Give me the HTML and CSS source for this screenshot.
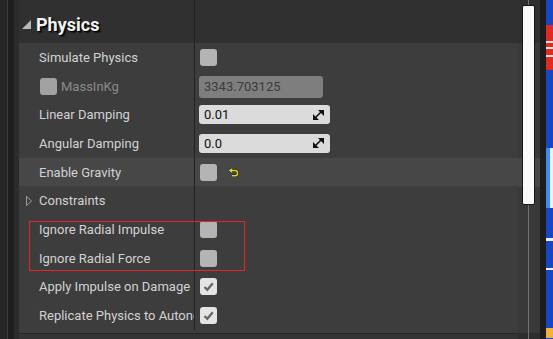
FILE: index.html
```html
<!DOCTYPE html>
<html lang="en">
<head>
  <title>Physics</title>
  <link rel="stylesheet" href="styles.css">
</head>
<body>
  <div class="edge"></div>
  <div class="gutter"></div>
  <div class="gutter2"></div>

  <div class="details">
    <div class="category">
      <div class="name">
        <svg class="cat-arrow" width="9" height="9" viewBox="0 0 9 9"><polygon points="9,0 9,9 0,9" fill="#b8b8b8"/></svg>
        <span class="cat-title">Physics</span>
      </div>
    </div>

    <div class="row">
      <div class="name">Simulate Physics</div>
      <div class="value"><span class="check"></span></div>
    </div>
    <div class="row">
      <div class="name name-sub">
        <span class="check check-off"></span>
        <span class="dim">MassInKg</span>
      </div>
      <div class="value"><div class="field field-off">3343.703125</div></div>
    </div>
    <div class="row">
      <div class="name">Linear Damping</div>
      <div class="value">
        <div class="field">0.01
          <svg class="spin" width="11" height="10" viewBox="0 0 11 10"><path d="M5 0H11V6Z M0 4V10H6Z" fill="#111"/><path d="M2.5 7.5L8.5 1.5" stroke="#111" stroke-width="1.6"/></svg>
        </div>
      </div>
    </div>
    <div class="row">
      <div class="name">Angular Damping</div>
      <div class="value">
        <div class="field">0.0
          <svg class="spin" width="11" height="10" viewBox="0 0 11 10"><path d="M5 0H11V6Z M0 4V10H6Z" fill="#111"/><path d="M2.5 7.5L8.5 1.5" stroke="#111" stroke-width="1.6"/></svg>
        </div>
      </div>
    </div>
    <div class="row row-hover">
      <div class="name">Enable Gravity</div>
      <div class="value">
        <span class="check"></span>
        <svg class="reset" width="10" height="10" viewBox="0 0 10 10">
          <path d="M3 0.8L1 2.5L3 4.2 M1 2.5H6Q8.6 2.5 8.6 5.2Q8.6 7.8 6 7.8H3" fill="none" stroke="#1b1b0a" stroke-width="2.6"/>
          <path d="M3 0.8L1 2.5L3 4.2 M1 2.5H6Q8.6 2.5 8.6 5.2Q8.6 7.8 6 7.8H3" fill="none" stroke="#d6d43c" stroke-width="1.5"/>
        </svg>
      </div>
    </div>
    <div class="row">
      <div class="name name-group">
        <svg width="6" height="10" viewBox="0 0 6 10"><polygon points="0.5,0.5 5.5,5 0.5,9.5" fill="none" stroke="#9c9c9c"/></svg>
        <span>Constraints</span>
      </div>
      <div class="value"></div>
    </div>
    <div class="row">
      <div class="name">Ignore Radial Impulse</div>
      <div class="value"><span class="check"></span></div>
    </div>
    <div class="row">
      <div class="name">Ignore Radial Force</div>
      <div class="value"><span class="check"></span></div>
    </div>
    <div class="row">
      <div class="name">Apply Impulse on Damage</div>
      <div class="value">
        <span class="check check-on"><svg width="17" height="17" viewBox="0 0 17 17"><path d="M4.5 9L7.3 11.8L12.8 5.2" fill="none" stroke="#686868" stroke-width="2.4"/></svg></span>
      </div>
    </div>
    <div class="row">
      <div class="name">Replicate Physics to Autonomous Proxy</div>
      <div class="value">
        <span class="check check-on"><svg width="17" height="17" viewBox="0 0 17 17"><path d="M4.5 9L7.3 11.8L12.8 5.2" fill="none" stroke="#686868" stroke-width="2.4"/></svg></span>
      </div>
    </div>

    <div class="details-end"></div>
    <div class="highlight"></div>
  </div>

  <div class="scroll">
    <div class="thumb"></div>
  </div>
  <div class="side"></div>
  <div class="desktop">
    <div class="dk-red"></div>
    <div class="dk-blue"></div>
    <div class="dk-light"></div>
    <div class="dk-blue2"></div>
  </div>
</body>
</html>
```

FILE: styles.css
```css
body {
  margin: 0;
  width: 553px;
  height: 339px;
  overflow: hidden;
  display: flex;
  background-color: #262626;
  font-family: Roboto, "Liberation Sans", sans-serif;
  font-size: 13px;
  color: #d2d2d2;
}

.edge {
  width: 7px;
  background-color: #262626;
  border-right: 1px solid #3b3b3b;
}

.gutter {
  width: 6px;
  background-color: #1e1e1e;
}

.gutter2 {
  width: 5px;
  background-color: #2b2b2b;
}

.details {
  width: 499px;
  position: relative;
  display: flex;
  flex-direction: column;
  background-color: #3d3d3d;
}

.category {
  height: 43px;
  display: flex;
  background-color: #303030;
}

.category .name {
  padding-left: 3px;
  padding-top: 6px;
  gap: 5px;
}

.cat-title {
  font-size: 18px;
  font-weight: bold;
  color: #f2f2f2;
  text-shadow: 1px 1px 0 #000, 2px 2px 1px rgba(0, 0, 0, 0.6);
}

.row {
  height: 28.7px;
  display: flex;
}

.row-hover {
  background-color: #474747;
}

.name {
  width: 176px;
  box-sizing: border-box;
  border-right: 1px solid #222;
  padding-left: 20px;
  display: flex;
  align-items: center;
  white-space: nowrap;
  overflow: hidden;
}

.name-sub {
  padding-left: 21px;
  gap: 4px;
}

.name-group {
  padding-left: 7px;
  gap: 7px;
}

.dim {
  color: #8a8a8a;
}

.value {
  flex: 1;
  padding-left: 5px;
  display: flex;
  align-items: center;
  gap: 12px;
}

.check {
  width: 17px;
  height: 17px;
  border-radius: 3px;
  background-color: #b4b4b4;
  display: block;
}

.check-off {
  background-color: #a2a2a2;
}

.check-on {
  background-color: #e4e4e4;
}

.check-on svg {
  display: block;
}

.field {
  width: 131px;
  height: 19px;
  box-sizing: border-box;
  border-radius: 3px;
  background-color: #dbdbdb;
  color: #111;
  padding: 0 6px 0 5px;
  display: flex;
  align-items: center;
  justify-content: space-between;
  margin-left: -1px;
}

.field-off {
  width: 124px;
  height: 22px;
  background-color: #7e7e7e;
  color: #3c3c3c;
  margin-top: 1px;
}

.reset {
  margin-top: 1px;
}

.details-end {
  flex: 1;
  margin-top: 3px;
  border-top: 1px solid #262626;
  background-color: #343434;
}

.highlight {
  position: absolute;
  left: 10px;
  top: 221px;
  width: 216px;
  height: 50px;
  box-sizing: border-box;
  border: 1px solid #e2262b;
}

.scroll {
  width: 22px;
  background: linear-gradient(#2f2f2f 0 43px, #393939 43px 158px, #474747 158px 187px, #393939 187px 333px, #2d2d2d 333px);
  position: relative;
}

.scroll::before {
  content: "";
  position: absolute;
  left: 10px;
  top: 0;
  bottom: 0;
  width: 1px;
  background-color: #707070;
}

.thumb {
  position: relative;
  margin: 5px 0 0 4px;
  width: 13px;
  height: 200px;
  box-sizing: border-box;
  border: 1px solid #151515;
  border-radius: 2px;
  background-color: #fafafa;
}

.side {
  width: 6px;
  background-color: #1d1d1d;
}

.desktop {
  flex: 1;
  display: flex;
  flex-direction: column;
  background-color: #1847c4;
}

.dk-red {
  margin-top: 25px;
  height: 45px;
  background: linear-gradient(#e02a20 0 16px, #f6e2dc 16px 18px, #e02a20 18px 22px, #f6e2dc 22px 24px, #e02a20 24px 30px, #f6e2dc 30px 32px, #e02a20 32px);
}

.dk-blue {
  height: 78px;
}

.dk-light {
  height: 60px;
  background: linear-gradient(90deg, #3d8cf2 60%, #e8f0ff 60%);
}

.dk-blue2 {
  flex: 1;
  background: linear-gradient(#1847c4 0 30px, #f0f0f0 30px 33px, #1847c4 33px 60px, #f3f3f3 60px 62px, #1847c4 62px 120px, #f2b23a 120px 130px, #1847c4 130px);
}
```
